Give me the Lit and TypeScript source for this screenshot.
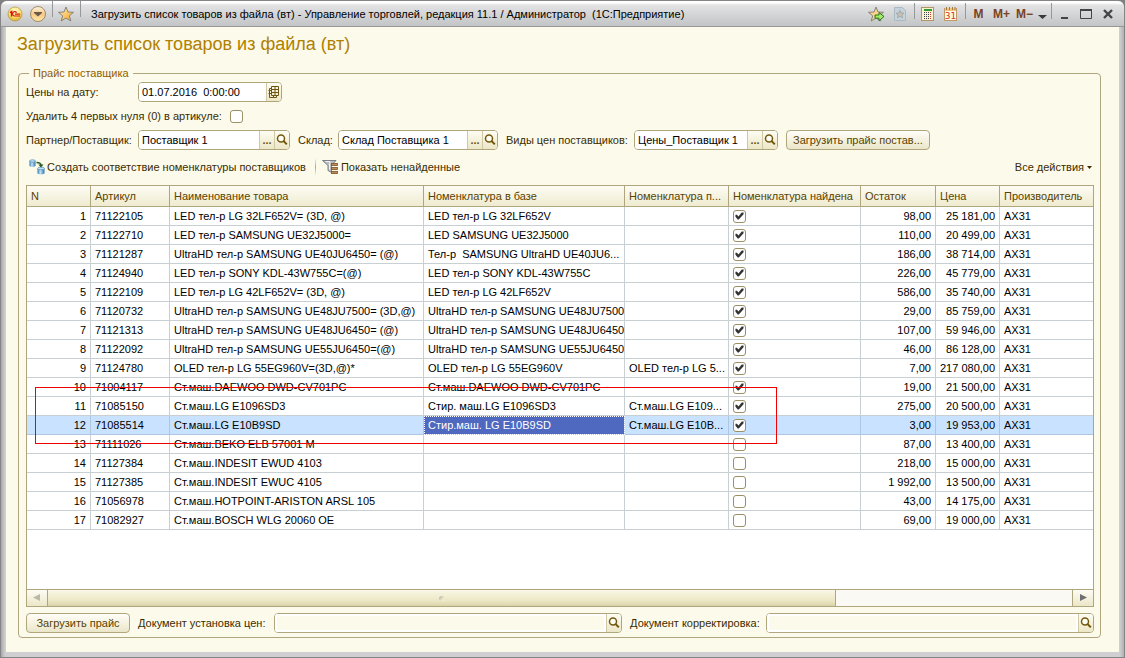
import { LitElement, html, css, svg } from "lit";
import { customElement, state } from "lit/decorators.js";

interface Row {
  code: string;
  name: string;
  base: string;
  partner: string;
  found: boolean;
  rest: string;
  price: string;
}

const row = (code: string, name: string, base: string, partner: string, found: boolean, rest: string, price: string): Row =>
  ({ code, name, base, partner, found, rest, price });

const ROWS: Row[] = [
  row("71122105", "LED тел-р LG 32LF652V= (3D, @)", "LED тел-р LG 32LF652V", "", true, "98,00", "25 181,00"),
  row("71122710", "LED тел-р SAMSUNG UE32J5000=", "LED SAMSUNG UE32J5000", "", true, "110,00", "20 499,00"),
  row("71121287", "UltraHD тел-р SAMSUNG UE40JU6450= (@)", "Тел-р  SAMSUNG UltraHD UE40JU6...", "", true, "186,00", "38 714,00"),
  row("71124940", "LED тел-р SONY KDL-43W755C=(@)", "LED тел-р SONY KDL-43W755C", "", true, "226,00", "45 779,00"),
  row("71122109", "LED тел-р LG 42LF652V= (3D, @)", "LED тел-р LG 42LF652V", "", true, "586,00", "35 740,00"),
  row("71120732", "UltraHD тел-р SAMSUNG UE48JU7500= (3D,@)", "UltraHD тел-р SAMSUNG UE48JU7500", "", true, "29,00", "85 759,00"),
  row("71121313", "UltraHD тел-р SAMSUNG UE48JU6450= (@)", "UltraHD тел-р SAMSUNG UE48JU6450", "", true, "107,00", "59 946,00"),
  row("71122092", "UltraHD тел-р SAMSUNG UE55JU6450=(@)", "UltraHD тел-р SAMSUNG UE55JU6450", "", true, "46,00", "86 128,00"),
  row("71124780", "OLED тел-р LG 55EG960V=(3D,@)*", "OLED тел-р LG 55EG960V", "OLED тел-р LG 5...", true, "7,00", "217 080,00"),
  row("71004117", "Ст.маш.DAEWOO DWD-CV701PC", "Ст.маш.DAEWOO DWD-CV701PC", "", true, "19,00", "21 500,00"),
  row("71085150", "Ст.маш.LG E1096SD3", "Стир. маш.LG E1096SD3", "Ст.маш.LG E109...", true, "275,00", "20 500,00"),
  row("71085514", "Ст.маш.LG E10B9SD", "Стир.маш. LG E10B9SD", "Ст.маш.LG E10B...", true, "3,00", "19 953,00"),
  row("71111026", "Ст.маш.BEKO ELB 57001 M", "", "", false, "87,00", "13 400,00"),
  row("71127384", "Ст.маш.INDESIT EWUD 4103", "", "", false, "218,00", "15 000,00"),
  row("71127385", "Ст.маш.INDESIT EWUC 4105", "", "", false, "1 992,00", "13 500,00"),
  row("71056978", "Ст.маш.HOTPOINT-ARISTON ARSL 105", "", "", false, "43,00", "14 175,00"),
  row("71082927", "Ст.маш.BOSCH WLG 20060 OE", "", "", false, "69,00", "19 000,00"),
];

const STAR = "M8 1 L10 6 L15.5 6.3 L11.3 9.8 L12.8 15 L8 12 L3.2 15 L4.7 9.8 L0.5 6.3 L6 6 Z";

const logoIcon = html`<svg width="16" height="16" viewBox="0 0 16 16">
  <defs><radialGradient id="lg" cx=".5" cy=".3" r=".7"><stop offset="0" stop-color="#fffbd0"/><stop offset=".6" stop-color="#fbe36a"/><stop offset="1" stop-color="#d9a92c"/></radialGradient></defs>
  <circle cx="8" cy="8" r="7" fill="url(#lg)" stroke="#b79a55" stroke-width=".8"/>
  <path d="M3 6.6 L4.6 5.6 V10.6" fill="none" stroke="#d8140c" stroke-width="1.5"/>
  <path d="M9.6 6.6 A2.2 2.2 0 1 0 8 10 H13.2 M8 8.2 H13.2" fill="none" stroke="#d8140c" stroke-width="1.2"/>
</svg>`;

const menuIcon = html`<svg width="18" height="18" viewBox="0 0 18 18">
  <defs><linearGradient id="mg" x1="0" y1="0" x2="0" y2="1"><stop offset="0" stop-color="#fff6e2"/><stop offset=".5" stop-color="#f6c887"/><stop offset="1" stop-color="#ffe9a8"/></linearGradient></defs>
  <circle cx="9" cy="9" r="7.5" fill="url(#mg)" stroke="#a18a68"/>
  <path d="M5 7 H13 V8 L9 11.5 L5 8 Z" fill="#6b5a45"/>
</svg>`;

const starIcon = html`<svg width="16" height="16" viewBox="0 0 16 16">
  <defs><linearGradient id="sg" x1="0" y1="0" x2="1" y2="1"><stop offset="0" stop-color="#fff0b8"/><stop offset=".6" stop-color="#fbc25a"/><stop offset="1" stop-color="#f09a2c"/></linearGradient></defs>
  <path d=${STAR} fill="url(#sg)" stroke="#85837c"/>
</svg>`;

const starArrowIcon = html`<svg width="18" height="16" viewBox="0 0 18 16">
  <path d=${STAR} fill="#fbd489" stroke="#85837c"/>
  <path d="M7 9 H11 V6.5 L16 10.5 L11 14.8 V12.2 H7 Z" fill="#a5e86a" stroke="#217a17"/>
</svg>`;

const starPageIcon = html`<svg width="14" height="16" viewBox="0 0 14 16">
  <path d="M1.5 1.5 H9.5 L12.5 4.5 V14.5 H1.5 Z" fill="#c5d2da" stroke="#a9bac4"/>
  <path d="M7 4.4 L8.1 7 L11 7.2 L8.8 9 L9.5 11.8 L7 10.3 L4.5 11.8 L5.2 9 L3 7.2 L5.9 7 Z" fill="#cbbfb0" stroke="#9ca3a8" stroke-width=".8"/>
</svg>`;

const calcIcon = html`<svg width="14" height="16" viewBox="0 0 14 16">
  <rect x=".5" y="1.5" width="12" height="13" fill="#fdf3d3" stroke="#b29468"/>
  <rect x="3" y="3" width="8" height="2" fill="#2f9a2f"/>
  ${[6, 8, 10, 12].map((y) => [3, 5, 7, 9].map((x) => svg`<rect x=${x} y=${y} width="1" height="1" fill=${x === 9 ? "#d23b2a" : "#39434f"}/>`))}
</svg>`;

const calendarIcon = html`<svg width="14" height="16" viewBox="0 0 14 16">
  <rect x=".5" y="2.5" width="12" height="12" fill="#fff7df" stroke="#c19a6b"/>
  <rect x="1" y="2" width="11" height="3" fill="#f0c684"/>
  <path d="M2.5 1 V4 M5.5 1 V4 M8.5 1 V4 M11 1 V4" stroke="#a2793f"/>
  <text class="cal" x="6.5" y="13" text-anchor="middle">31</text>
</svg>`;

const gridIcon = html`<svg width="12" height="12" viewBox="0 0 12 12">
  <path d="M3.5 .5 H10.5 V9.5 H3.5 Z M3.5 3.5 H10.5 M3.5 6.5 H10.5 M7 .5 V9.5 M1.5 2.5 V11.5 H8.5 V9.5 M.5 4.5 H3.5 M.5 7.5 H3.5 M1.5 2.5 H3.5 M5.5 9.5 V11.5" fill="none" stroke="#6d5613"/>
</svg>`;

const lensIcon = html`<svg width="12" height="12" viewBox="0 0 12 12">
  <circle cx="5" cy="4.5" r="3.5" fill="#fffef4" stroke="#73580f" stroke-width="1.5"/>
  <path d="M7.5 7 L10.8 10.4" stroke="#73580f" stroke-width="2"/>
</svg>`;

const linkIcon = html`<svg width="16" height="16" viewBox="0 0 16 16">
  <defs><linearGradient id="cy"><stop offset="0" stop-color="#2f78b0"/><stop offset=".4" stop-color="#c2e4f8"/><stop offset="1" stop-color="#2f74a8"/></linearGradient></defs>
  <path d="M.5 2 V7 Q3.5 9 6.5 7 V2 Z" fill="url(#cy)"/><ellipse cx="3.5" cy="2" rx="3" ry="1.2" fill="#bfe2f6" stroke="#3f80b0" stroke-width=".6"/>
  <path d="M8.5 9.5 V14.5 Q12 16.6 15.5 14.5 V9.5 Z" fill="url(#cy)"/><ellipse cx="12" cy="9.5" rx="3.5" ry="1.3" fill="#bfe2f6" stroke="#3f80b0" stroke-width=".6"/>
  <path d="M7.5 3.5 Q12 3.5 12 6.5" fill="none" stroke="#265a1c" stroke-width="1.3"/><path d="M9.3 5.6 H14.5 L12 8.6 Z" fill="#265a1c"/>
</svg>`;

const filterIcon = html`<svg width="17" height="16" viewBox="0 0 17 16">
  <path d="M.5 1.5 H14 L9.5 6.5 V13.5 L6 11.5 V6.5 Z" fill="#b9bdc2" stroke="#7d8185"/>
  <path d="M3.5 2.5 H8 L7.5 6 V10.5" fill="none" stroke="#f3f5f7"/>
  <rect x="9.5" y="4.5" width="6" height="2" fill="#c08a50" stroke="#7c5228" stroke-width=".8"/>
  <rect x="9.5" y="8.5" width="6" height="2" fill="#c08a50" stroke="#7c5228" stroke-width=".8"/>
  <rect x="9.5" y="12.5" width="6" height="2" fill="#c08a50" stroke="#7c5228" stroke-width=".8"/>
</svg>`;

@customElement("app-root")
export class AppRoot extends LitElement {
  @state() private rows = ROWS;
  @state() private current = 11;

  static styles = css`
    :host {
      display: block;
      background: #7f7f7f;
      font: 11px/18px "Liberation Sans", Arial, sans-serif;
      color: #3b2c00;
    }
    * { box-sizing: border-box; }
    svg { display: block; flex: none; }
    button, input { font: inherit; color: inherit; margin: 0; padding: 0; }
    button { border: 0; background: none; white-space: nowrap; }

    .window {
      min-height: 100vh;
      display: flex;
      flex-direction: column;
      border: 1px solid #858585;
      border-radius: 7px 7px 0 0;
      background: linear-gradient(90deg, #a8a8ac, #cfcfd1 4px, #cfcfd1 calc(100% - 4px), #b0b0b4);
      padding: 0 5px 5px;
      overflow: hidden;
    }
    .titlebar {
      display: flex;
      align-items: center;
      height: 26px;
      margin: 0 -5px;
      padding: 0 5px 0 2px;
      background: linear-gradient(#fff 0, #fff 2px, #e3e3e4 4px, #c3c4c6 25px, #98989c 25px);
      color: #000;
    }
    .titlebar button { display: grid; place-items: center; width: 23px; height: 22px; }
    .caption { flex: 1; margin: 0 0 0 9px; white-space: pre; }
    .sep { width: 1px; height: 16px; margin: 0 1px 0 3px; align-self: flex-start; background: #96979b; }
    .tools { display: flex; align-items: center; }
    .titlebar .memory { color: #7a4322; font-weight: bold; font-size: 12px; }
    .titlebar .more { width: 12px; }
    .titlebar .win { width: 22px; }
    .cal { font: 9px "DejaVu Sans", sans-serif; fill: #e03018; }

    .form {
      flex: 1;
      display: flex;
      flex-direction: column;
      background: #fcfaeb;
      padding: 5px 18px 14px 11px;
    }
    h1 { margin: 0 0 17px; font: 18px/24px "Liberation Sans", Arial, sans-serif; color: #b08000; }
    .group {
      flex: 1;
      display: flex;
      flex-direction: column;
      min-width: 0;
      margin: 0 0 0 1px;
      padding: 0 6px 4px 7px;
      border: 1px solid #b0a67e;
      border-radius: 4px;
    }
    h2 {
      align-self: flex-start;
      margin: -8px 0 0 3px;
      padding: 0 4px;
      background: #fcfaeb;
      font: 11px/14px "Liberation Sans", Arial, sans-serif;
      color: #946000;
    }
    .line { display: flex; align-items: center; gap: 8px; height: 20px; }
    .line + .line { margin-top: 4px; }
    .first { margin-top: 2px; }
    .pair { display: flex; align-items: center; min-width: 0; }
    .pair label { flex: none; white-space: nowrap; }
    .label-main { width: 112px; }
    .label-store { width: 40px; }
    .label-kind { width: 128px; }
    .label-doc { width: 136px; }

    .field {
      display: flex;
      height: 20px;
      border: 1px solid #b0a67e;
      border-radius: 4px;
      overflow: hidden;
      background: #fff;
      color: #000;
    }
    .field input { flex: 1; min-width: 0; padding: 0 3px; border: 0; outline: 0; background: #fff; }
    .field button {
      flex: none;
      display: grid;
      place-items: center;
      width: 15px;
      border-left: 1px solid #cfc8a2;
      background: linear-gradient(#fdfcf2, #ece7c6);
      color: #6b5210;
      font-weight: bold;
    }
    .w-date { width: 144px; }
    .w-partner { width: 152px; }
    .w-store { width: 160px; }
    .w-kind { width: 144px; }
    .grow { flex: 1; min-width: 0; }
    .grow input { background: #fcfaeb; border: 2px solid #fff; }

    .push {
      height: 20px;
      border: 1px solid #b0a67e;
      border-radius: 4px;
      background: linear-gradient(#fffef8, #ebe6c9);
      color: #5a4300;
      line-height: 16px;
    }
    .w-push { width: 144px; }

    .check {
      appearance: none;
      display: block;
      width: 13px;
      height: 13px;
      border: 1px solid #9a8f65;
      border-radius: 3px;
      background: #fff;
    }
    .check:checked::before {
      content: "";
      display: block;
      width: 9px;
      height: 9px;
      margin: 1px;
      background: #333;
      clip-path: polygon(5% 35%, 22% 35%, 38% 55%, 75% 12%, 95% 12%, 95% 30%, 42% 88%, 30% 88%, 5% 58%);
    }
    .zeros label { min-width: 192px; }

    .commands { display: flex; align-items: center; height: 22px; margin: 6px 0 7px; }
    .commands button { display: flex; align-items: center; gap: 2px; color: #3b2c00; }
    .commands .bar { width: 1px; height: 18px; margin: 0 6px 0 9px; background: linear-gradient(#fcfaeb, #b0a67e, #fcfaeb); }
    .commands .all { margin-left: auto; gap: 3px; padding-right: 2px; }
    .commands .create { padding-left: 3px; }

    .grid {
      position: relative;
      flex: 1;
      display: flex;
      flex-direction: column;
      border: 1px solid #b0a67e;
      background: #fff;
      color: #000;
    }
    table { width: 100%; table-layout: fixed; border-spacing: 0; margin-bottom: auto; }
    th, td { padding: 0 4px; border: solid #c8d0d4; border-width: 0 1px 1px 0; overflow: hidden; white-space: pre; text-align: left; font-weight: normal; }
    th { height: 21px; border-color: #b0a67e; background: linear-gradient(#fdfcf4, #efebd0); color: #5a4300; }
    td { height: 19px; }
    th:last-child, td:last-child { border-right: 0; }
    td.num { text-align: right; }
    .c-n { width: 64px; }
    .c-code { width: 79px; }
    .c-name { width: 254px; }
    .c-base { width: 201px; }
    .c-partner { width: 104px; }
    .c-found { width: 132px; }
    .c-rest { width: 75px; }
    .c-price { width: 64px; }
    .current td { background: #c9e2ff; border-color: #aec6e2; }
    .current .active { background: #4f68c0; color: #fff; outline: 1px dotted #fff; outline-offset: -1px; }
    .mark {
      position: absolute;
      left: 8px;
      top: 201px;
      width: 742px;
      height: 57px;
      border: 1px solid #f00000;
      pointer-events: none;
    }

    .scroll { display: flex; height: 17px; border-top: 1px solid #b0a67e; background: #faf9f4; }
    .scroll button { display: grid; place-items: center; width: 21px; background: linear-gradient(#fdfcf4, #ece7c8); }
    .scroll .prev { border-right: 1px solid #b0a67e; }
    .scroll .next { border-left: 1px solid #b0a67e; }
    .track { flex: 1; display: flex; }
    .thumb {
      display: grid;
      place-items: center;
      width: 77%;
      border-right: 1px solid #b0a67e;
      background: linear-gradient(#f9f7e6, #ebe6c2 70%, #d9d3a8);
    }
    .grip { width: 5px; height: 5px; border-radius: 3px; background: linear-gradient(135deg, #b5af92, #fffef0); }

    .footer { display: grid; grid-template-columns: 104px 24fr 23fr; gap: 8px; margin-top: 6px; }
  `;

  private field(id: string, size: string, value: string, dots = true) {
    return html`<span class="field ${size}">
      <input id=${id} type="text" .value=${value} />
      ${dots ? html`<button aria-label="Выбрать">...</button>` : ""}
      <button aria-label="Открыть">${lensIcon}</button>
    </span>`;
  }

  private renderTitlebar() {
    return html`<header class="titlebar">
      <button aria-label="1С">${logoIcon}</button>
      <button aria-label="Меню">${menuIcon}</button>
      <span class="sep"></span>
      <button aria-label="Избранное">${starIcon}</button>
      <span class="sep"></span>
      <p class="caption">Загрузить список товаров из файла (вт) - Управление торговлей, редакция 11.1 / Администратор  (1С:Предприятие)</p>
      <div class="tools">
        <button aria-label="Добавить в избранное">${starArrowIcon}</button>
        <button aria-label="Страница" disabled>${starPageIcon}</button>
        <span class="sep"></span>
        <button aria-label="Калькулятор">${calcIcon}</button>
        <button aria-label="Календарь">${calendarIcon}</button>
        <span class="sep"></span>
        <button class="memory">M</button>
        <button class="memory">M+</button>
        <button class="memory">M−</button>
        <button class="more" aria-label="Ещё"><svg width="9" height="12"><path d="M0 7 H9 L4.5 11 Z" fill="#3a3a3a"/></svg></button>
        <span class="sep"></span>
        <button class="win" aria-label="Свернуть"><svg width="12" height="12"><path d="M3 10 H10" stroke="#444" stroke-width="2"/></svg></button>
        <button class="win" aria-label="Развернуть"><svg width="12" height="12"><path d="M.5 1 V10.5 H11.5 V1" fill="none" stroke="#444"/><path d="M0 2 H12" stroke="#444" stroke-width="2"/></svg></button>
        <button class="win" aria-label="Закрыть"><svg width="12" height="12"><path d="M2 2 L10 10 M10 2 L2 10" stroke="#444" stroke-width="2.4"/></svg></button>
      </div>
    </header>`;
  }

  private renderRow(r: Row, i: number) {
    return html`<tr class=${i === this.current ? "current" : ""} @click=${() => (this.current = i)}>
      <td class="num">${i + 1}</td>
      <td>${r.code}</td>
      <td>${r.name}</td>
      <td class="active">${r.base}</td>
      <td>${r.partner}</td>
      <td><input class="check" type="checkbox" aria-label="Номенклатура найдена" .checked=${r.found} /></td>
      <td class="num">${r.rest}</td>
      <td class="num">${r.price}</td>
      <td>AX31</td>
    </tr>`;
  }

  render() {
    return html`<div class="window">
      ${this.renderTitlebar()}
      <main class="form">
        <h1>Загрузить список товаров из файла (вт)</h1>
        <section class="group" aria-labelledby="group-title">
          <h2 id="group-title">Прайс поставщика</h2>
          <div class="line first">
            <div class="pair">
              <label class="label-main" for="date">Цены на дату:</label>
              <span class="field w-date">
                <input id="date" type="text" .value=${"01.07.2016  0:00:00"} />
                <button aria-label="Календарь">${gridIcon}</button>
              </span>
            </div>
          </div>
          <div class="line zeros">
            <label for="zeros">Удалить 4 первых нуля (0) в артикуле:</label>
            <input id="zeros" class="check" type="checkbox" />
          </div>
          <div class="line">
            <div class="pair"><label class="label-main" for="partner">Партнер/Поставщик:</label>${this.field("partner", "w-partner", "Поставщик 1")}</div>
            <div class="pair"><label class="label-store" for="store">Склад:</label>${this.field("store", "w-store", "Склад Поставщика 1")}</div>
            <div class="pair"><label class="label-kind" for="kind">Виды цен поставщиков:</label>${this.field("kind", "w-kind", "Цены_Поставщик 1")}</div>
            <button class="push w-push">Загрузить прайс постав...</button>
          </div>
          <div class="commands">
            <button class="create">${linkIcon}Создать соответствие номенклатуры поставщиков</button>
            <span class="bar"></span>
            <button>${filterIcon}Показать ненайденные</button>
            <button class="all">Все действия<svg width="5" height="3"><path d="M0 0 H5 L2.5 3 Z" fill="#3b2c00"/></svg></button>
          </div>
          <div class="grid">
            <table>
              <thead>
                <tr>
                  <th class="c-n">N</th>
                  <th class="c-code">Артикул</th>
                  <th class="c-name">Наименование товара</th>
                  <th class="c-base">Номенклатура в базе</th>
                  <th class="c-partner">Номенклатура п...</th>
                  <th class="c-found">Номенклатура найдена</th>
                  <th class="c-rest">Остаток</th>
                  <th class="c-price">Цена</th>
                  <th>Производитель</th>
                </tr>
              </thead>
              <tbody>${this.rows.map((r, i) => this.renderRow(r, i))}</tbody>
            </table>
            <div class="mark"></div>
            <div class="scroll">
              <button class="prev" aria-label="Влево"><svg width="8" height="8"><path d="M7 0 V7 L0 3.5 Z" fill="#bdb9a6"/></svg></button>
              <div class="track"><div class="thumb"><span class="grip"></span></div></div>
              <button class="next" aria-label="Вправо"><svg width="8" height="8"><path d="M1 0 V7 L8 3.5 Z" fill="#6f6f70"/></svg></button>
            </div>
          </div>
          <div class="footer">
            <button class="push">Загрузить прайс</button>
            <div class="pair"><label class="label-doc" for="doc-price">Документ установка цен:</label>${this.field("doc-price", "grow", "", false)}</div>
            <div class="pair"><label class="label-doc" for="doc-fix">Документ корректировка:</label>${this.field("doc-fix", "grow", "", false)}</div>
          </div>
        </section>
      </main>
    </div>`;
  }
}
